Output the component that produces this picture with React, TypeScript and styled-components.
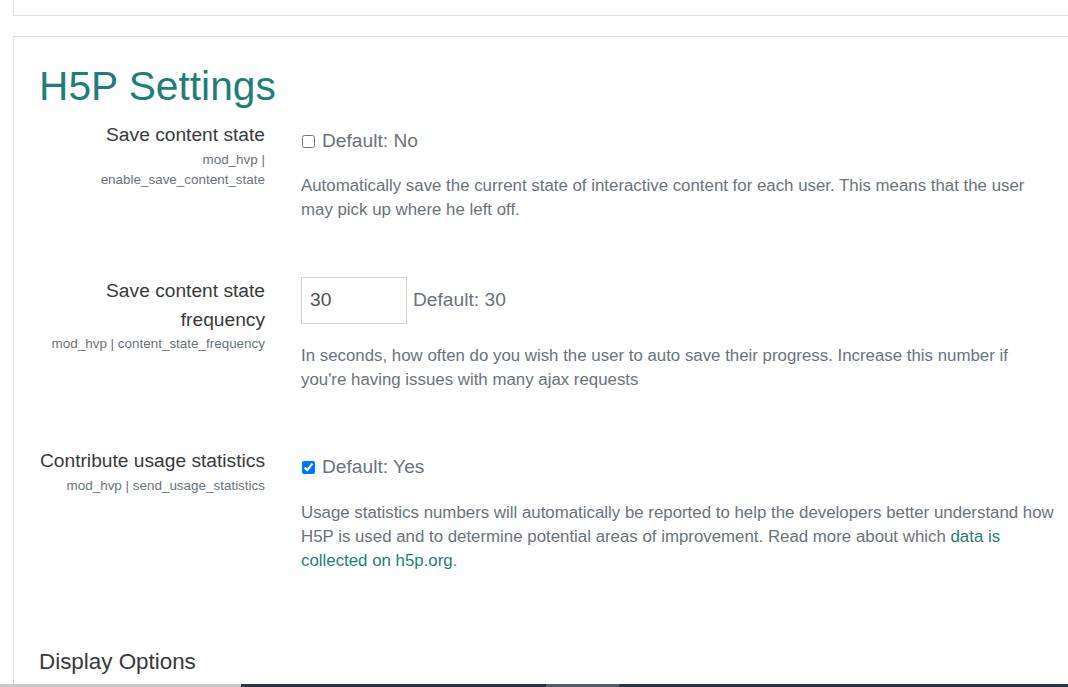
import React from "react";
import styled, { createGlobalStyle } from "styled-components";

const Global = createGlobalStyle`
  html, body { margin: 0; padding: 0; background: #fff; overflow: hidden; }
  body { font-family: "Liberation Sans", Arial, sans-serif; color: #373a3c; }
`;

const Page = styled.div`
  padding-left: 13px;
  width: 1120px;
`;

const TopCard = styled.div`
  box-sizing: border-box;
  height: 16px;
  border-left: 1px solid #dee2e6;
  border-bottom: 1px solid #dee2e6;
`;

const Card = styled.section`
  margin-top: 20px;
  border-top: 1px solid #dee2e6;
  border-left: 1px solid #dee2e6;
  padding: 25px 0 40px 25px;
  min-height: 700px;
`;

const Heading = styled.h2`
  margin: 0;
  font-size: 40.7px;
  line-height: 48px;
  font-weight: 400;
  color: #1f7f78;
`;

const Row = styled.div<{ $top: number }>`
  display: grid;
  grid-template-columns: 226px 753px;
  column-gap: 36px;
  margin-top: ${(p) => p.$top}px;
`;

const LabelCol = styled.div`
  text-align: right;
`;

const Label = styled.div`
  font-size: 19.2px;
  line-height: 28.8px;
  color: #373a3c;
`;

const Ident = styled.div`
  font-size: 13.44px;
  line-height: 20.16px;
  color: #6a737b;
`;

const ContentCol = styled.div<{ $pad: number }>`
  padding-top: ${(p) => p.$pad}px;
`;

const Control = styled.div`
  display: flex;
  align-items: center;
  font-size: 19.2px;
  line-height: 28.8px;
  color: #6a737b;
`;

const Check = styled.input`
  width: 13px;
  height: 13px;
  margin: 0 7px 0 1px;
`;

const TextInput = styled.input`
  box-sizing: border-box;
  width: 106px;
  height: 47px;
  border: 1px solid #ced4da;
  border-radius: 0;
  padding: 0 8px;
  font-family: "Liberation Sans", Arial, sans-serif;
  font-size: 19.2px;
  color: #495057;
  margin-right: 6px;
  outline: none;
`;

const Description = styled.p<{ $gap: number }>`
  margin: ${(p) => p.$gap}px 0 0;
  font-size: 16.85px;
  line-height: 24px;
  color: #6a737b;
`;

const Link = styled.a`
  color: #1f7f78;
  text-decoration: none;
`;

const SubHeading = styled.h3`
  margin: 75px 0 0;
  font-size: 22.4px;
  line-height: 27px;
  font-weight: 400;
  color: #373a3c;
`;

const BottomBar = styled.div`
  position: fixed;
  left: 0;
  right: 0;
  bottom: 0;
  height: 3px;
  display: flex;
`;

const BarSeg = styled.div<{ $w: string; $c: string }>`
  flex: ${(p) => p.$w};
  background: ${(p) => p.$c};
`;

export default function App() {
  return (
    <>
      <Global />
      <Page>
        <TopCard />
        <Card>
          <Heading>H5P Settings</Heading>

          <Row $top={11}>
            <LabelCol>
              <Label>Save content state</Label>
              <Ident>
                mod_hvp |<br />
                enable_save_content_state
              </Ident>
            </LabelCol>
            <ContentCol $pad={6}>
              <Control>
                <Check type="checkbox" readOnly />
                Default: No
              </Control>
              <Description $gap={18}>
                Automatically save the current state of interactive content for each user. This means that the user may pick up where he left off.
              </Description>
            </ContentCol>
          </Row>

          <Row $top={55}>
            <LabelCol>
              <Label>
                Save content state
                <br />
                frequency
              </Label>
              <Ident>mod_hvp | content_state_frequency</Ident>
            </LabelCol>
            <ContentCol $pad={0}>
              <Control>
                <TextInput type="text" defaultValue="30" />
                Default: 30
              </Control>
              <Description $gap={20}>
                In seconds, how often do you wish the user to auto save their progress. Increase this number if you're having issues with many ajax requests
              </Description>
            </ContentCol>
          </Row>

          <Row $top={55}>
            <LabelCol>
              <Label>Contribute usage statistics</Label>
              <Ident>mod_hvp | send_usage_statistics</Ident>
            </LabelCol>
            <ContentCol $pad={6}>
              <Control>
                <Check type="checkbox" defaultChecked />
                Default: Yes
              </Control>
              <Description $gap={19}>
                Usage statistics numbers will automatically be reported to help the developers better understand how H5P is used and to determine potential areas of improvement. Read more about which{" "}
                <Link href="#">data is collected on h5p.org</Link>.
              </Description>
            </ContentCol>
          </Row>

          <SubHeading>Display Options</SubHeading>
        </Card>
      </Page>
      <BottomBar>
        <BarSeg $w="0 0 241px" $c="#c9c9c9" />
        <BarSeg $w="0 0 305px" $c="#273444" />
        <BarSeg $w="0 0 73px" $c="#535d69" />
        <BarSeg $w="1 1 auto" $c="#273444" />
      </BottomBar>
    </>
  );
}
